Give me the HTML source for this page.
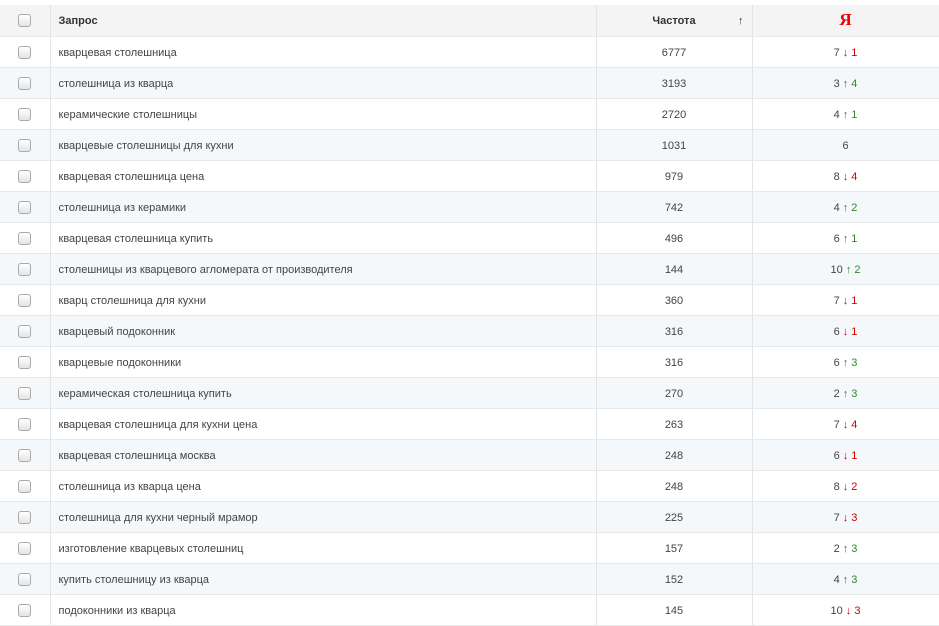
<!DOCTYPE html><html><head><meta charset="utf-8"><style>
body{margin:0;width:939px;height:626px;overflow:hidden;background:#fff;font-family:"Liberation Sans","DejaVu Sans",sans-serif;font-size:11px;color:#444}
table{border-collapse:collapse;position:absolute;left:0;top:5px;width:939px;table-layout:fixed}
td,th{border-right:1px solid #e4e4e4;border-bottom:1px solid #e8e8e8;padding:0;line-height:12px;padding-top:2px;box-sizing:border-box;height:31px}
th{background:#f4f4f4;font-weight:bold;color:#333;text-align:left}
tr:nth-child(odd) td{background:#f5f8fa}
td.c,th.c{text-align:center}
.cb{display:inline-block;width:11px;height:11px;border:1px solid #aaa;border-radius:3px;background:linear-gradient(#fff,#e4e4e4);vertical-align:-2px}
.q{padding-left:8px}
.d{color:#c00}.u{color:#2a8a2a}.d b,.u b{font-weight:bold}
</style></head><body>
<table>
<colgroup><col style="width:50px"><col style="width:546px"><col style="width:156px"><col style="width:187px"></colgroup>
<tr><th class="c"><span class="cb"></span></th><th class="q">Запрос</th><th class="c" style="position:relative">Частота<span style="position:absolute;right:8px;font-weight:normal">↑</span></th><th class="c"><span style="color:#e00;font-size:17px;font-family:'Liberation Serif',serif;font-weight:bold">Я</span></th></tr>
<tr><td class="c"><span class="cb"></span></td><td class="q">кварцевая столешница</td><td class="c">6777</td><td class="c">7 <span class="d"><b>↓</b> 1</span></td></tr>
<tr><td class="c"><span class="cb"></span></td><td class="q">столешница из кварца</td><td class="c">3193</td><td class="c">3 <span class="u"><b>↑</b> 4</span></td></tr>
<tr><td class="c"><span class="cb"></span></td><td class="q">керамические столешницы</td><td class="c">2720</td><td class="c">4 <span class="u"><b>↑</b> 1</span></td></tr>
<tr><td class="c"><span class="cb"></span></td><td class="q">кварцевые столешницы для кухни</td><td class="c">1031</td><td class="c">6</td></tr>
<tr><td class="c"><span class="cb"></span></td><td class="q">кварцевая столешница цена</td><td class="c">979</td><td class="c">8 <span class="d"><b>↓</b> 4</span></td></tr>
<tr><td class="c"><span class="cb"></span></td><td class="q">столешница из керамики</td><td class="c">742</td><td class="c">4 <span class="u"><b>↑</b> 2</span></td></tr>
<tr><td class="c"><span class="cb"></span></td><td class="q">кварцевая столешница купить</td><td class="c">496</td><td class="c">6 <span class="u"><b>↑</b> 1</span></td></tr>
<tr><td class="c"><span class="cb"></span></td><td class="q">столешницы из кварцевого агломерата от производителя</td><td class="c">144</td><td class="c">10 <span class="u"><b>↑</b> 2</span></td></tr>
<tr><td class="c"><span class="cb"></span></td><td class="q">кварц столешница для кухни</td><td class="c">360</td><td class="c">7 <span class="d"><b>↓</b> 1</span></td></tr>
<tr><td class="c"><span class="cb"></span></td><td class="q">кварцевый подоконник</td><td class="c">316</td><td class="c">6 <span class="d"><b>↓</b> 1</span></td></tr>
<tr><td class="c"><span class="cb"></span></td><td class="q">кварцевые подоконники</td><td class="c">316</td><td class="c">6 <span class="u"><b>↑</b> 3</span></td></tr>
<tr><td class="c"><span class="cb"></span></td><td class="q">керамическая столешница купить</td><td class="c">270</td><td class="c">2 <span class="u"><b>↑</b> 3</span></td></tr>
<tr><td class="c"><span class="cb"></span></td><td class="q">кварцевая столешница для кухни цена</td><td class="c">263</td><td class="c">7 <span class="d"><b>↓</b> 4</span></td></tr>
<tr><td class="c"><span class="cb"></span></td><td class="q">кварцевая столешница москва</td><td class="c">248</td><td class="c">6 <span class="d"><b>↓</b> 1</span></td></tr>
<tr><td class="c"><span class="cb"></span></td><td class="q">столешница из кварца цена</td><td class="c">248</td><td class="c">8 <span class="d"><b>↓</b> 2</span></td></tr>
<tr><td class="c"><span class="cb"></span></td><td class="q">столешница для кухни черный мрамор</td><td class="c">225</td><td class="c">7 <span class="d"><b>↓</b> 3</span></td></tr>
<tr><td class="c"><span class="cb"></span></td><td class="q">изготовление кварцевых столешниц</td><td class="c">157</td><td class="c">2 <span class="u"><b>↑</b> 3</span></td></tr>
<tr><td class="c"><span class="cb"></span></td><td class="q">купить столешницу из кварца</td><td class="c">152</td><td class="c">4 <span class="u"><b>↑</b> 3</span></td></tr>
<tr><td class="c"><span class="cb"></span></td><td class="q">подоконники из кварца</td><td class="c">145</td><td class="c">10 <span class="d"><b>↓</b> 3</span></td></tr>
</table>
</body></html>
